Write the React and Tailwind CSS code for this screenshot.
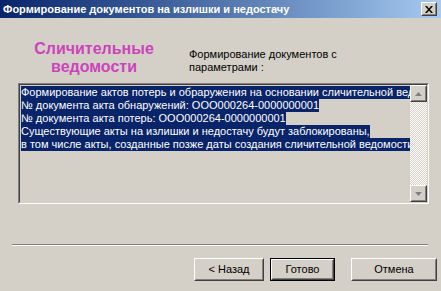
import React from 'react'

const font = "font-['Tahoma','Liberation_Sans',sans-serif]"

const lines = [
  'Формирование актов потерь и обраружения на основании сличительной ведомости',
  '№ документа акта обнаружений: ООО000264-0000000001',
  '№ документа акта потерь: ООО000264-0000000001',
  'Существующие акты на излишки и недостачу будут заблокированы,',
  'в том числе акты, созданные позже даты создания сличительной ведомости',
]

// classic raised 3d frame
const Raised = ({ className = '', children }) => (
  <div className={`border border-t-white border-l-white border-r-[#404040] border-b-[#404040] ${className}`}>
    <div className="w-full h-full border border-t-[#d4d0c8] border-l-[#d4d0c8] border-r-[#808080] border-b-[#808080] flex items-center justify-center">
      {children}
    </div>
  </div>
)

const Button = ({ label, width, isDefault }) =>
  isDefault ? (
    <div className={`${width} h-[23px] border border-black`}>
      <Raised className="w-full h-full">
        <span className="text-[11px] text-black">{label}</span>
      </Raised>
    </div>
  ) : (
    <Raised className={`${width} h-[23px]`}>
      <span className="text-[11px] text-black">{label}</span>
    </Raised>
  )

export default function App() {
  return (
    <div className={`w-[441px] h-[291px] bg-[#d4d0c8] overflow-hidden flex flex-col ${font}`}>
      {/* title bar */}
      <div className="h-[18px] flex items-center justify-between bg-gradient-to-r from-[#0a246a] to-[#a6caf0] pl-[3px] pr-[4px]">
        <span className="text-white text-[11px] font-bold leading-none">
          Формирование документов на излишки и недостачу
        </span>
        <Raised className="w-[16px] h-[14px] bg-[#d4d0c8]">
          <svg width="8" height="7" viewBox="0 0 8 7">
            <path d="M0 0h2l2 2.5L6 0h2L5 3.5 8 7H6L4 4.5 2 7H0l3-3.5z" fill="#000" />
          </svg>
        </Raised>
      </div>

      {/* header */}
      <div className="h-[65px] flex">
        <div className="ml-[19px] w-[150px] pt-[22px] text-center text-[16px] leading-[18px] font-bold text-[#cc44bb]">
          Сличительные
          <br />
          ведомости
        </div>
        <div className="ml-[20px] pt-[30px] text-[11px] leading-[13px] text-black">
          Формирование документов с
          <br />
          параметрами :
        </div>
      </div>

      {/* text box */}
      <div className="ml-[18px] w-[411px] h-[121px] border border-t-[#808080] border-l-[#808080] border-r-white border-b-white">
        <div className="w-full h-full flex border border-t-[#404040] border-l-[#404040] border-r-[#d4d0c8] border-b-[#d4d0c8]">
          <div className="flex-1 min-w-0 overflow-hidden pl-[1px] pt-[1px] flex flex-col items-start">
            {lines.map((l) => (
              <span
                key={l}
                className="block whitespace-nowrap bg-[#0a246a] text-white text-[11px] leading-[13px] h-[13px]"
              >
                {l}
              </span>
            ))}
          </div>
          <div className="w-[17px] flex flex-col bg-[repeating-conic-gradient(#ffffff_0_25%,#d4d0c8_0_50%)] bg-[length:2px_2px]">
            <Raised className="w-[17px] h-[17px] bg-[#d4d0c8]">
              <svg width="7" height="4" viewBox="0 0 7 4">
                <path d="M3.5 0L7 4H0z" fill="#808080" />
              </svg>
            </Raised>
            <div className="flex-1" />
            <Raised className="w-[17px] h-[17px] bg-[#d4d0c8]">
              <svg width="7" height="4" viewBox="0 0 7 4">
                <path d="M0 0h7L3.5 4z" fill="#808080" />
              </svg>
            </Raised>
          </div>
        </div>
      </div>

      {/* separator */}
      <div className="ml-[12px] w-[416px] mt-[40px] border-t border-t-[#808080] border-b border-b-white" />

      {/* buttons */}
      <div className="mt-[12px] flex ml-[194px] gap-[6px]">
        <Button label="< Назад" width="w-[70px]" />
        <Button label="Готово" width="w-[65px]" isDefault />
        <div className="w-[4px]" />
        <Button label="Отмена" width="w-[86px]" />
      </div>
    </div>
  )
}
